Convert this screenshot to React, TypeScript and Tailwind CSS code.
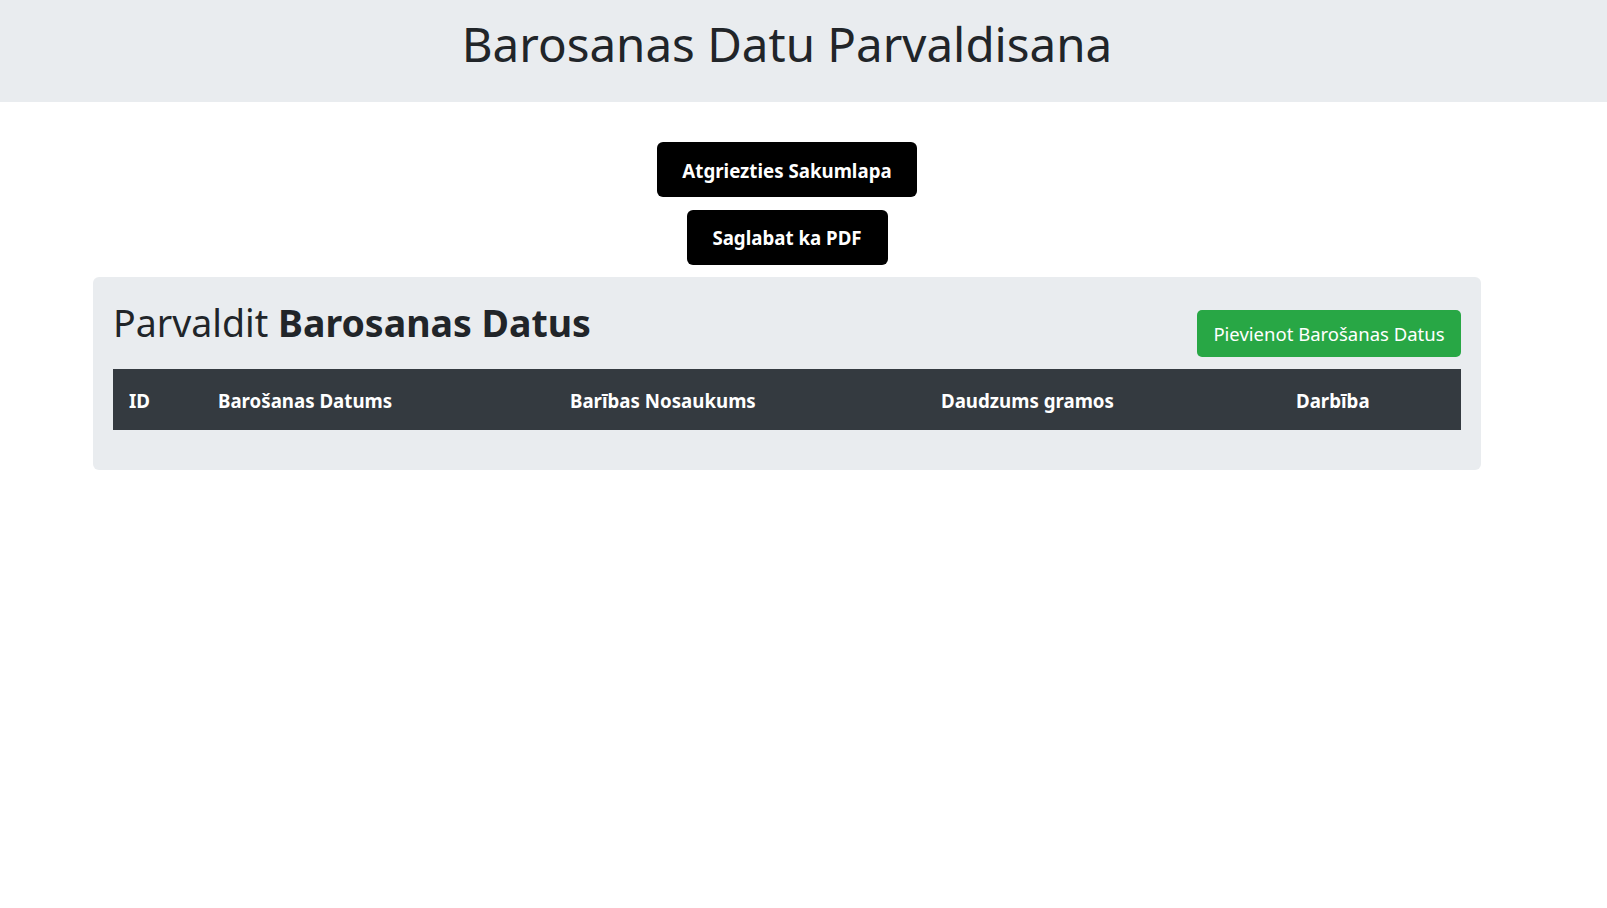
import React from "react";

export default function App() {
  const cols = [
    "ID",
    "Barošanas Datums",
    "Barības Nosaukums",
    "Daudzums gramos",
    "Darbība",
  ];
  return (
    <div className="min-h-screen bg-white font-['Noto_Sans',sans-serif] text-[#212529]">
      <header className="h-[102px] bg-[#e9ecef]">
        <div className="flex h-full w-[1574px] items-center justify-center pb-[15px]">
          <h1 className="text-[47.5px] font-normal leading-none">Barosanas Datu Parvaldisana</h1>
        </div>
      </header>

      <div className="flex w-[1574px] flex-col items-center pt-[40px]">
        <button className="h-[55px] w-[260px] rounded-[6px] bg-black pt-[3px] text-[18.7px] font-bold text-white">
          Atgriezties Sakumlapa
        </button>
        <button className="mt-[13px] h-[55px] w-[201px] rounded-[6px] bg-black pt-[2px] text-[18.7px] font-bold text-white">
          Saglabat ka PDF
        </button>
      </div>

      <div className="mt-[12px] w-[1574px] px-[93px]">
        <div className="rounded-[6px] bg-[#e9ecef] px-[20px] pb-[40px] pt-[20px]">
          <div className="flex items-start justify-between">
            <h2 className="mt-[2px] text-[37.5px] leading-[48px]">
              Parvaldit <span className="font-bold">Barosanas Datus</span>
            </h2>
            <button className="mt-[13px] h-[47px] w-[264px] rounded-[5px] bg-[#28a745] text-[18.5px] text-white">
              Pievienot Barošanas Datus
            </button>
          </div>
          <div className="mt-[12px] grid h-[61px] grid-cols-[89px_352px_371px_355px_1fr] items-center bg-[#343a40] pt-[4px] text-[18.7px] font-bold text-white">
            {cols.map((c) => (
              <div key={c} className="px-[16px]">
                {c}
              </div>
            ))}
          </div>
        </div>
      </div>
    </div>
  );
}
